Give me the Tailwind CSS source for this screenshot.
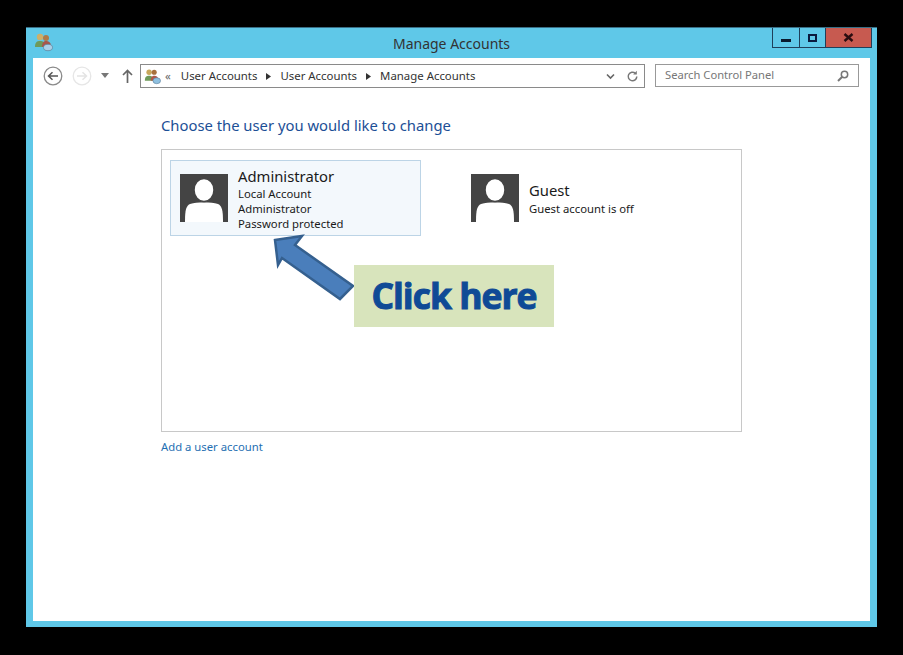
<!DOCTYPE html>
<html><head><meta charset="utf-8">
<script src="https://cdn.jsdelivr.net/npm/@tailwindcss/browser@4"></script>
</head>
<body class="bg-black m-0 w-[903px] h-[655px] overflow-hidden font-['Noto_Sans',sans-serif] text-[#1a1a1a]">
<div class="pl-[26px] pt-[27px]">
<div class="relative w-[851px] h-[600px] bg-[#5fc8e8] flex flex-col border-t border-[#3a6f86]">
  <!-- title bar -->
  <div class="h-[30px] flex items-center justify-center text-[14px] text-[#333] relative">
    <span class="mt-[1px]">Manage Accounts</span>
    <svg class="absolute left-[8px] top-[4px]" width="20" height="20" viewBox="0 0 20 20">
      <circle cx="6" cy="5" r="3.200" fill="#cdb06a"/><path d="M1 15c0-5 2-6 5-6s5 1 5 6z" fill="#6f9a5a"/>
      <circle cx="12" cy="6" r="3" fill="#b07a48"/><path d="M8 15c0-5 2-6 4-6s5 1 5 5z" fill="#a8564a"/>
      <ellipse cx="14" cy="15.500" rx="4.500" ry="3.200" fill="#a9cfe6" stroke="#5a7f9a" stroke-width=".7"/>
    </svg>
    <div class="absolute right-[5px] top-0 flex h-[20px] border border-t-0 border-[#1f3f5a]">
      <div class="w-[27px] flex items-center justify-center border-r border-[#1f3f5a]"><div class="w-[10px] h-[3px] mt-[5px] bg-[#0a1a2e]"></div></div>
      <div class="w-[26px] flex items-center justify-center border-r border-[#1f3f5a]"><div class="w-[9px] h-[8px] border-2 border-[#0a1a3e]"></div></div>
      <div class="w-[45px] bg-[#c75a50] flex items-center justify-center">
        <svg width="11" height="9" viewBox="0 0 11 9"><path d="M1.500 1l8 7M9.500 1l-8 7" stroke="#2a0d10" stroke-width="2.400"/></svg>
      </div>
    </div>
  </div>
  <!-- client -->
  <div class="mx-[7px] h-[563px] bg-white relative">
    <!-- toolbar -->
    <div class="h-[36px] flex items-start pt-[6px] relative">
      <svg class="ml-[10px] mt-[2px]" width="20" height="20" viewBox="0 0 20 20"><circle cx="10" cy="10" r="8.800" fill="none" stroke="#8a8a8a" stroke-width="1.300"/><path d="M15 10H6M9.500 6.200L5.500 10l4 3.800" fill="none" stroke="#555" stroke-width="1.500"/></svg>
      <svg class="ml-[9px] mt-[2px]" width="20" height="20" viewBox="0 0 20 20"><circle cx="10" cy="10" r="8.800" fill="none" stroke="#e6e6e6" stroke-width="1.300"/><path d="M5 10h9M10.500 6.200l4 3.800-4 3.800" fill="none" stroke="#e4e4e4" stroke-width="1.500"/></svg>
      <svg class="ml-[9px] mt-[9px]" width="8" height="5" viewBox="0 0 8 5"><path d="M0 0h8L4 5z" fill="#777"/></svg>
      <svg class="ml-[13px] mt-[5px]" width="11" height="14" viewBox="0 0 11 14"><path d="M5.500 14V2M1 6l4.500-4.500L10 6" fill="none" stroke="#666" stroke-width="1.700"/></svg>
      <div class="ml-[7px] w-[505px] h-[24px] border border-[#8a8a8a] flex items-center text-[11.400px] text-[#333] relative">
        <svg class="ml-[3px]" width="17" height="17" viewBox="0 0 20 20">
          <circle cx="6" cy="5" r="3.200" fill="#c9a85c"/><path d="M1 15c0-5 2-6 5-6s5 1 5 6z" fill="#6f9a5a"/>
          <circle cx="12" cy="5" r="3" fill="#a8703c"/><path d="M8 15c0-5 2-6 4-6s5 1 5 5z" fill="#b0584a"/>
          <ellipse cx="15" cy="15" rx="4.500" ry="3.500" fill="#8fc0e0" stroke="#5a7f9a" stroke-width=".7"/>
        </svg>
        <span class="ml-[4px] text-[#666]">«</span>
        <span class="ml-[10px]">User Accounts</span>
        <svg class="mx-[9px]" width="5" height="7" viewBox="0 0 5 7"><path d="M0 0l5 3.500L0 7z" fill="#333"/></svg>
        <span>User Accounts</span>
        <svg class="mx-[9px]" width="5" height="7" viewBox="0 0 5 7"><path d="M0 0l5 3.500L0 7z" fill="#333"/></svg>
        <span>Manage Accounts</span>
        <svg class="absolute right-[29px] top-[8px]" width="9" height="7" viewBox="0 0 9 7"><path d="M1 1.500l3.500 3.500L8 1.500" fill="none" stroke="#666" stroke-width="1.600"/></svg>
        <svg class="absolute right-[5px] top-[5px]" width="13" height="13" viewBox="0 0 13 13"><path d="M10.800 6.500a4.300 4.300 0 1 1-1.500-3.300" fill="none" stroke="#777" stroke-width="1.500"/><path d="M10.800 .8v3.600H7.200z" fill="#777"/></svg>
      </div>
      <div class="ml-[10px] w-[204px] h-[23px] border border-[#999] flex items-center justify-between pl-[9px] pr-[9px] text-[11.200px] text-[#777]">
        <span>Search Control Panel</span>
        <svg width="12" height="12" viewBox="0 0 12 12"><circle cx="7.500" cy="4.500" r="3.200" fill="none" stroke="#777" stroke-width="1.500"/><path d="M5 7l-4 4" stroke="#777" stroke-width="2"/></svg>
      </div>
    </div>
    <!-- content -->
    <div class="pl-[128px]">
      <h1 class="mt-[19px] h-[24px] leading-[24px] text-[14.800px] text-[#1c4f96]">Choose the user you would like to change</h1>
      <div class="mt-[12px] w-[581px] h-[283px] border border-[#c8c8c8] flex items-start pt-[10px] pl-[8px]">
        <div class="w-[251px] h-[76px] bg-[#f3f8fc] border border-[#bcd4e6] flex">
          <svg class="ml-[9px] mt-[13px]" width="48" height="48" viewBox="0 0 48 48"><rect width="48" height="48" fill="#444"/><path d="M5 48c0-12 1-16 5-18 4-1.500 8-1.500 14-1.500s10 0 14 1.500c4 2 5 6 5 18z" fill="#fff"/><ellipse cx="24" cy="16" rx="10" ry="11.500" fill="#fff" stroke="#444" stroke-width="1.500"/></svg>
          <div class="ml-[10px] flex flex-col">
            <div class="text-[14.800px] leading-[20px] mt-[5px]">Administrator</div>
            <div class="text-[11.300px] leading-[15px]">Local Account</div>
            <div class="text-[11.300px] leading-[15px]">Administrator</div>
            <div class="text-[11.300px] leading-[15px]">Password protected</div>
          </div>
        </div>
        <div class="ml-[50px] flex">
          <svg class="mt-[14px]" width="48" height="48" viewBox="0 0 48 48"><rect width="48" height="48" fill="#444"/><path d="M5 48c0-12 1-16 5-18 4-1.500 8-1.500 14-1.500s10 0 14 1.500c4 2 5 6 5 18z" fill="#fff"/><ellipse cx="24" cy="16" rx="10" ry="11.500" fill="#fff" stroke="#444" stroke-width="1.500"/></svg>
          <div class="ml-[10px] flex flex-col">
            <div class="text-[14.800px] leading-[20px] mt-[20px]">Guest</div>
            <div class="text-[11.300px] leading-[15px] mt-[1px]">Guest account is off</div>
          </div>
        </div>
      </div>
      <div class="mt-[7px] text-[11.300px] leading-[16px] text-[#1f6fb2]">Add a user account</div>
    </div>
    <!-- annotation -->
    <svg class="absolute left-[235px] top-[175px]" width="90" height="70" viewBox="0 0 90 70">
      <path d="M7 7L34 3 27 12 85 53 72 66 14 25 10 32z" fill="#4a7ebb" stroke="#35608f" stroke-width="2.500" stroke-linejoin="miter"/>
    </svg>
    <div class="absolute left-[321px] top-[207px] w-[200px] h-[62px] bg-[#d8e4bc] flex items-center justify-center text-[35.500px] font-bold text-[#0f4a96] font-['Open_Sans',sans-serif] tracking-[-1px] [-webkit-text-stroke:1px_#0f4a96]">Click here</div>
  </div>
</div>
</div>
</body></html>
